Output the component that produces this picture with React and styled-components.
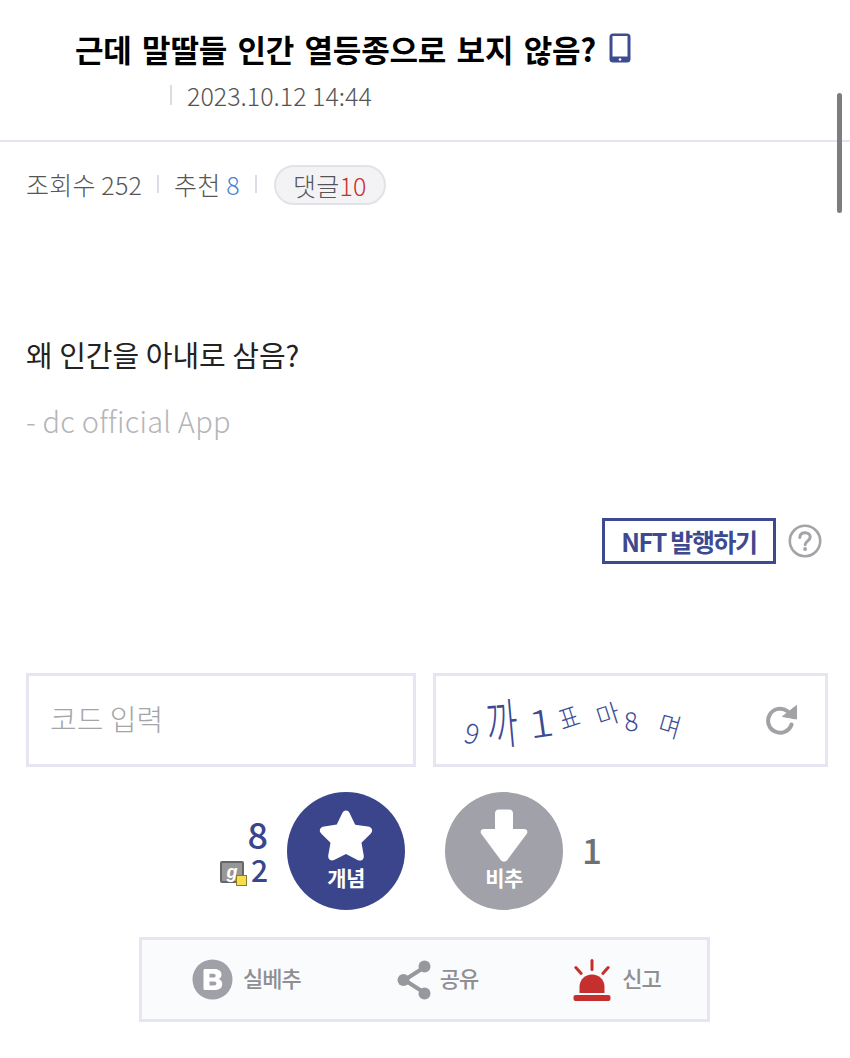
import React from 'react';
import styled, { createGlobalStyle } from 'styled-components';

const GlobalStyle = createGlobalStyle`
  html, body {
    margin: 0;
    padding: 0;
    height: 100%;
    background: #fff;
    overflow: hidden;
  }
  * { box-sizing: border-box; }
  body {
    font-family: "Noto Sans CJK KR", "Noto Sans", sans-serif;
    color: #444;
  }
`;

const Page = styled.div`
  position: relative;
  width: 850px;
  height: 1058px;
  background: #fff;
`;

const ScrollThumb = styled.div`
  position: absolute;
  top: 93px;
  left: 837px;
  width: 5px;
  height: 120px;
  border-radius: 3px;
  background: #7d7d80;
`;

const Header = styled.header`
  height: 142px;
  border-bottom: 2px solid #e4e5ee;
  padding: 27px 0 0 75px;
`;

const TitleRow = styled.div`
  display: flex;
  align-items: center;
  gap: 12px;
  height: 42px;
`;

const Title = styled.h1`
  margin: 0;
  font-size: 31px;
  font-weight: 700;
  letter-spacing: -0.2px;
  word-spacing: 3.6px;
  color: #000;
  white-space: nowrap;
`;

const DateRow = styled.div`
  display: flex;
  align-items: center;
  gap: 15px;
  margin: 5px 0 0 95px;
  height: 42px;
  font-size: 25px;
  font-weight: 300;
  color: #555;
`;

const Divider = styled.span`
  display: inline-block;
  width: 2px;
  height: ${(p) => p.$h || 20}px;
  background: #dcdde4;
`;

const MetaRow = styled.div`
  display: flex;
  align-items: center;
  gap: 15px;
  padding: 21px 0 0 26px;
  font-size: 25px;
  font-weight: 300;
  letter-spacing: 0.2px;
  color: #555;
`;

const Accent = styled.span`
  color: ${(p) => p.$color};
`;

const CommentPill = styled.span`
  display: inline-flex;
  align-items: center;
  justify-content: center;
  width: 112px;
  height: 40px;
  margin: 2px 0 0 2px;
  border: 2px solid #e2e3e8;
  border-radius: 20px;
  background: #f3f3f5;
`;

const Body = styled.section`
  padding: 129px 0 0 26px;
`;

const Question = styled.p`
  margin: 0;
  height: 40px;
  line-height: 40px;
  font-size: 29px;
  font-weight: 400;
  color: #222;
`;

const AppTag = styled.p`
  margin: 26px 0 0;
  height: 40px;
  line-height: 40px;
  font-size: 29px;
  font-weight: 300;
  letter-spacing: 0.25px;
  color: #b5b5b8;
`;

const NftRow = styled.div`
  display: flex;
  justify-content: flex-end;
  align-items: center;
  gap: 12px;
  padding: 78px 28px 0 0;
`;

const NftButton = styled.button`
  width: 174px;
  height: 46px;
  padding: 0;
  border: 3px solid #3d4a8f;
  background: #fff;
  color: #3d4a8f;
  font-family: inherit;
  font-size: 25px;
  font-weight: 700;
  letter-spacing: -1.4px;
`;

const CaptchaRow = styled.div`
  display: flex;
  gap: 17px;
  padding: 109px 22px 0 26px;
`;

const CodeInput = styled.div`
  display: flex;
  align-items: center;
  width: 390px;
  height: 94px;
  padding: 0 0 4px 21px;
  border: 3px solid #e5e6f1;
  font-size: 29px;
  font-weight: 300;
  color: #a5a5a9;
`;

const CaptchaBox = styled.div`
  display: flex;
  align-items: center;
  justify-content: space-between;
  width: 395px;
  height: 94px;
  padding: 0 27px 0 29px;
  border: 3px solid #e5e6f1;
`;

const CaptchaText = styled.div`
  display: flex;
  align-items: center;
  font-weight: 300;
  color: #3c4a94;
`;

const CaptchaGlyph = styled.span`
  display: inline-block;
  margin-left: ${(p) => p.$gap}px;
  font-size: ${(p) => p.$size}px;
  line-height: 1;
  transform: translateY(${(p) => p.$y}px) rotate(${(p) => p.$rot}deg) scale(${(p) => p.$sx}, ${(p) => p.$sy});
`;

const VoteRow = styled.div`
  display: flex;
  align-items: center;
  justify-content: center;
  padding-top: 25px;
`;

const VoteSide = styled.div`
  flex: 1;
  display: flex;
  align-items: center;
  justify-content: ${(p) => (p.$end ? 'flex-end' : 'flex-start')};
  padding: ${(p) => (p.$end ? '0 19px 0 0' : '0 0 5px 19px')};
`;

const VoteButtons = styled.div`
  display: flex;
  gap: 40px;
`;

const UpCounts = styled.div`
  display: flex;
  flex-direction: column;
  align-items: flex-end;
  gap: 1px;
  margin-top: -3px;
  color: #3a458c;
  font-weight: 500;
`;

const BigCount = styled.span`
  display: block;
  font-size: 36px;
  line-height: 38px;
`;

const SmallCountRow = styled.div`
  display: flex;
  align-items: center;
  gap: 7px;
  font-size: 30px;
  line-height: 32px;
`;

const GallIcon = styled.span`
  position: relative;
  display: flex;
  align-items: center;
  justify-content: center;
  width: 24px;
  height: 22px;
  margin-top: 6px;
  border: 2px solid #666;
  border-radius: 2px;
  background: #979797;
  color: #fff;
  font-family: "Liberation Sans", sans-serif;
  font-size: 18px;
  font-weight: 700;
  font-style: italic;
  line-height: 1;

  &::after {
    content: '';
    position: absolute;
    right: -5px;
    bottom: -5px;
    width: 9px;
    height: 9px;
    border: 1px solid #8a7d2a;
    background: #f6de4c;
  }
`;

const DownCount = styled.span`
  font-size: 35px;
  font-weight: 500;
  color: #6f7074;
`;

const VoteButton = styled.button`
  display: flex;
  flex-direction: column;
  align-items: center;
  width: 118px;
  height: 118px;
  padding: 17px 0 0;
  border: 0;
  border-radius: 50%;
  background: ${(p) => p.$bg};
  color: #fff;
  font-family: inherit;
  font-size: 21px;
  font-weight: 700;
  letter-spacing: -0.5px;
  line-height: 28px;
  flex-shrink: 0;
`;

const ActionBar = styled.div`
  display: flex;
  align-items: center;
  width: 571px;
  height: 85px;
  margin: 27px 0 0 139px;
  padding: 0 0 0 50px;
  border: 3px solid #e5e6f1;
  background: #fafbfd;
`;

const Action = styled.div`
  display: flex;
  align-items: center;
  gap: ${(p) => p.$gap}px;
  margin-right: ${(p) => p.$mr || 0}px;
  font-size: 22px;
  font-weight: 500;
  letter-spacing: -1px;
  color: #8e8e93;
`;

const ActionLabel = styled.span`
  padding-bottom: 5px;
`;

const PhoneIcon = () => (
  <svg width="24" height="32" viewBox="0 0 24 32">
    <rect x="1.5" y="1.5" width="21" height="29" rx="3.5" fill="#3f4b91" />
    <rect x="4.5" y="4" width="15" height="20.5" fill="#fff" />
    <circle cx="12" cy="27.5" r="1.3" fill="#fff" />
  </svg>
);

const QuestionIcon = () => (
  <svg width="34" height="34" viewBox="0 0 34 34">
    <circle cx="17" cy="17" r="15.2" fill="none" stroke="#a4a4a8" strokeWidth="2.6" />
    <path d="M11.8 13.4c.3-3 2.4-4.6 5.3-4.6 3 0 5.1 1.8 5.1 4.3 0 3.7-4.9 3.8-5 7.6" fill="none" stroke="#a4a4a8" strokeWidth="3" strokeLinecap="round" />
    <circle cx="17.1" cy="25" r="1.9" fill="#a4a4a8" />
  </svg>
);

const RefreshIcon = () => (
  <svg width="32" height="32" viewBox="0 0 32 32">
    <path d="M25.5 20.5A12 12 0 1 1 21.6 7.3" fill="none" stroke="#a2a2a6" strokeWidth="4" strokeLinecap="round" />
    <path d="M30.5 1.5 L30.5 15 L16.5 12.5 Z" fill="#a2a2a6" stroke="#a2a2a6" strokeWidth="1" strokeLinejoin="round" />
  </svg>
);

const StarIcon = () => (
  <svg width="56" height="54" viewBox="0 0 56 54">
    <path
      d="M28 1.5c1.9 0 3 1.1 3.8 2.9l5.4 11.3 12.6 1.8c4.3.6 5.8 4.2 2.8 7.3l-9.1 9 2.2 12.4c.7 4.2-2.5 6.6-6.2 4.7L28 44.9l-11.5 5.9c-3.7 1.9-6.9-.5-6.2-4.7l2.2-12.4-9.1-9c-3-3.1-1.5-6.7 2.8-7.3l12.6-1.8 5.4-11.3C25 2.6 26.1 1.5 28 1.5z"
      fill="#fff"
    />
  </svg>
);

const ArrowIcon = () => (
  <svg width="48" height="54" viewBox="0 0 48 54">
    <path
      d="M15 4.5C15 2 16.500 .5 19 .5h10c2.500 0 4 1.500 4 4v15.500h11c3 0 4.300 2.700 2.600 5L27.300 51c-1.700 2.300-4.900 2.300-6.600 0L1.400 25c-1.700-2.300-.4-5 2.600-5h11z"
      fill="#fff"
    />
  </svg>
);

const BestIcon = () => (
  <svg width="41" height="41" viewBox="0 0 41 41">
    <circle cx="20.500" cy="20.500" r="20" fill="#a0a1a8" />
    <path
      fillRule="evenodd"
      d="M11.500 11.500c0-.8.7-1.500 1.500-1.500h9.500c4.300 0 7 2.300 7 5.600 0 2.100-1 3.700-2.800 4.500 2.300.8 3.600 2.600 3.600 5 0 3.700-2.900 6-7.400 6H13c-.8 0-1.500-.7-1.500-1.500zM17.500 14.800v3.800h4c1.300 0 2.100-.7 2.100-1.900s-.8-1.900-2.100-1.900zM17.500 22.600v4h4.500c1.500 0 2.400-.8 2.400-2s-.9-2-2.400-2z"
      fill="#fff"
    />
  </svg>
);

const ShareIcon = () => (
  <svg width="35" height="40" viewBox="0 0 35 40">
    <path d="M27 7.500 7.500 20 27 32.500" fill="none" stroke="#97979d" strokeWidth="4" />
    <circle cx="27.500" cy="6.500" r="6" fill="#97979d" />
    <circle cx="6.500" cy="20" r="6" fill="#97979d" />
    <circle cx="27.500" cy="33.500" r="6" fill="#97979d" />
  </svg>
);

const SirenIcon = () => (
  <svg width="38" height="42" viewBox="0 0 38 42">
    <g fill="#c5302e">
      <rect x="17.500" y="0" width="3" height="12" rx="1.500" />
      <rect x="4" y="6" width="3" height="11" rx="1.500" transform="rotate(-42 5.500 11.500)" />
      <rect x="31" y="6" width="3" height="11" rx="1.500" transform="rotate(42 32.500 11.500)" />
      <path d="M6.500 34V28C6.500 20.500 12 15.500 19 15.500S31.500 20.500 31.500 28V34z" />
      <rect x="0.500" y="36" width="37" height="6" rx="2" />
    </g>
  </svg>
);

const captchaGlyphs = [
  { ch: '9', size: 28, gap: 0, y: 12, rot: 15, sx: 0.95, sy: 1 },
  { ch: '까', size: 36, gap: 5, y: 0, rot: -5, sx: 0.95, sy: 1.5 },
  { ch: '1', size: 36, gap: 13, y: 0, rot: -8, sx: 1.3, sy: 1.05 },
  { ch: '표', size: 25, gap: 7, y: -4, rot: -18, sx: 0.9, sy: 1.1 },
  { ch: '마', size: 25, gap: 16, y: -7, rot: -18, sx: 1, sy: 1 },
  { ch: '8', size: 26, gap: 5, y: 0, rot: -5, sx: 1, sy: 1 },
  { ch: '며', size: 24, gap: 21, y: 5, rot: 16, sx: 1, sy: 1.1 },
];

export default function App() {
  return (
    <Page>
      <GlobalStyle />
      <Header>
        <TitleRow>
          <Title>근데 말딸들 인간 열등종으로 보지 않음?</Title>
          <PhoneIcon />
        </TitleRow>
        <DateRow>
          <Divider $h={20} />
          <span>2023.10.12 14:44</span>
        </DateRow>
      </Header>

      <MetaRow>
        <span>조회수 252</span>
        <Divider $h={18} />
        <span>
          추천 <Accent $color="#4a7fd6">8</Accent>
        </span>
        <Divider $h={18} />
        <CommentPill>
          댓글<Accent $color="#c5302e">10</Accent>
        </CommentPill>
      </MetaRow>

      <Body>
        <Question>왜 인간을 아내로 삼음?</Question>
        <AppTag>- dc official App</AppTag>
      </Body>

      <NftRow>
        <NftButton>NFT 발행하기</NftButton>
        <QuestionIcon />
      </NftRow>

      <CaptchaRow>
        <CodeInput>코드 입력</CodeInput>
        <CaptchaBox>
          <CaptchaText>
            {captchaGlyphs.map((g, i) => (
              <CaptchaGlyph key={i} $size={g.size} $gap={g.gap} $y={g.y} $rot={g.rot} $sx={g.sx} $sy={g.sy}>
                {g.ch}
              </CaptchaGlyph>
            ))}
          </CaptchaText>
          <RefreshIcon />
        </CaptchaBox>
      </CaptchaRow>

      <VoteRow>
        <VoteSide $end>
          <UpCounts>
            <BigCount>8</BigCount>
            <SmallCountRow>
              <GallIcon>g</GallIcon>
              <span>2</span>
            </SmallCountRow>
          </UpCounts>
        </VoteSide>
        <VoteButtons>
          <VoteButton $bg="#3a458c">
            <StarIcon />
            개념
          </VoteButton>
          <VoteButton $bg="#a0a1a9">
            <ArrowIcon />
            비추
          </VoteButton>
        </VoteButtons>
        <VoteSide>
          <DownCount>1</DownCount>
        </VoteSide>
      </VoteRow>

      <ActionBar>
        <Action $gap={10} $mr={96}>
          <BestIcon />
          <ActionLabel>실베추</ActionLabel>
        </Action>
        <Action $gap={8} $mr={95}>
          <ShareIcon />
          <ActionLabel>공유</ActionLabel>
        </Action>
        <Action $gap={11}>
          <SirenIcon />
          <ActionLabel>신고</ActionLabel>
        </Action>
      </ActionBar>

      <ScrollThumb />
    </Page>
  );
}
